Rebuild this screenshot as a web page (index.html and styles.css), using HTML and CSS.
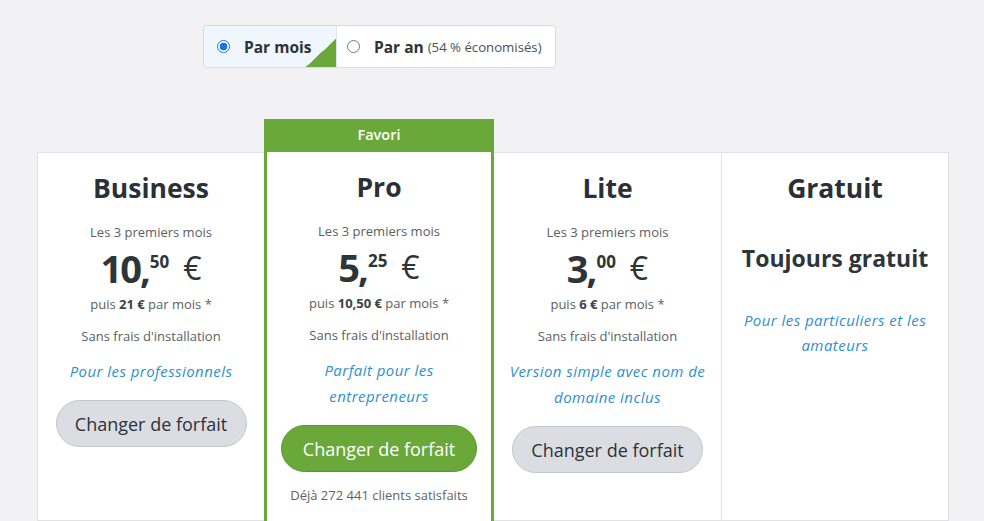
FILE: index.html
```html
<!DOCTYPE html>
<html lang="fr">
<head>
<meta charset="utf-8">
<link rel="stylesheet" href="styles.css">
</head>
<body>
<div class="page">
  <div class="toggle">
    <div class="seg seg-active">
      <span class="radio radio-on"></span>
      <span class="seg-label">Par mois</span>
      <span class="corner"></span>
    </div>
    <div class="seg seg-year">
      <span class="radio"></span>
      <span class="seg-label">Par an</span>
      <span class="seg-note">(54 % économisés)</span>
    </div>
  </div>

  <div class="plans">
    <div class="card">
      <h2 class="title">Business</h2>
      <div class="small">Les 3 premiers mois</div>
      <div class="price"><span class="int">10,</span><sup class="dec">50</sup><span class="cur">€</span></div>
      <div class="small">puis <b>21 €</b> par mois *</div>
      <div class="small setup">Sans frais d'installation</div>
      <div class="desc">Pour les professionnels</div>
      <button class="btn">Changer de forfait</button>
    </div>
    <div class="card card-pro">
      <div class="fav">Favori</div>
      <div class="pro-body">
        <h2 class="title">Pro</h2>
        <div class="small">Les 3 premiers mois</div>
        <div class="price"><span class="int">5,</span><sup class="dec">25</sup><span class="cur">€</span></div>
        <div class="small">puis <b>10,50 €</b> par mois *</div>
        <div class="small setup">Sans frais d'installation</div>
        <div class="desc">Parfait pour les<br>entrepreneurs</div>
        <button class="btn btn-green">Changer de forfait</button>
        <div class="small clients">Déjà 272 441 clients satisfaits</div>
      </div>
    </div>
    <div class="card">
      <h2 class="title">Lite</h2>
      <div class="small">Les 3 premiers mois</div>
      <div class="price"><span class="int">3,</span><sup class="dec">00</sup><span class="cur">€</span></div>
      <div class="small">puis <b>6 €</b> par mois *</div>
      <div class="small setup">Sans frais d'installation</div>
      <div class="desc">Version simple avec nom de<br>domaine inclus</div>
      <button class="btn">Changer de forfait</button>
    </div>
    <div class="card">
      <h2 class="title">Gratuit</h2>
      <div class="free">Toujours gratuit</div>
      <div class="desc desc-free">Pour les particuliers et les<br>amateurs</div>
    </div>
  </div>
</div>
</body>
</html>
```

FILE: styles.css
```css
* { box-sizing: border-box; }
html, body {
  margin: 0;
  padding: 0;
  background: #f2f2f4;
  font-family: "Open Sans", "Lato", sans-serif;
  color: #2c3338;
  overflow: hidden;
}
.page {
  width: 984px;
  height: 521px;
  padding-top: 25px;
}
.toggle {
  margin-left: 203px;
  width: 353px;
  height: 43px;
  display: flex;
  border: 1px solid #dadbde;
  border-radius: 3px;
  background: #fff;
  overflow: hidden;
}
.seg {
  position: relative;
  display: flex;
  align-items: center;
  padding-left: 13px;
}
.seg-year { padding-left: 10px; }
.seg-active {
  width: 133px;
  background: #eff6fd;
  border-right: 1px solid #dde3ea;
}
.radio {
  width: 13px;
  height: 13px;
  border-radius: 50%;
  border: 1px solid #777;
  background: #fff;
  margin-right: 14px;
  flex: none;
}
.radio-on {
  border: 1.5px solid #1a73e8;
  background: radial-gradient(circle, #1a73e8 0 3.6px, #fff 4.2px);
}
.seg-label {
  font-weight: 700;
  font-size: 15.5px;
  color: #2c3338;
}
.seg-note {
  font-size: 13.2px;
  color: #4a5055;
  margin-left: 4px;
}
.corner {
  position: absolute;
  right: 0;
  bottom: 0;
  width: 30px;
  height: 28px;
  background: linear-gradient(to top left, #6aa83a 50%, transparent 50.5%);
}
.plans {
  margin-top: 51px;
  margin-left: 37px;
  width: 912px;
  display: grid;
  grid-template-columns: 228px 229px 228px 227px;
  align-items: start;
}
.card {
  margin-top: 33px;
  height: 369px;
  background: #fff;
  border: 1px solid #e1e1e4;
  display: flex;
  flex-direction: column;
  align-items: center;
  text-align: center;
  padding-top: 18px;
}
.card + .card { border-left: none; }
.card.card-pro {
  margin-top: 0;
  height: 420px;
  padding: 0;
  border: 3px solid #6aa83a;
  border-top: none;
  align-items: stretch;
  margin-left: -1px;
  width: 230px;
}
.card-pro + .card { border-left: none; }
.fav {
  height: 33px;
  background: #6aa83a;
  color: #fff;
  font-size: 14.5px;
  font-weight: 600;
  line-height: 31px;
  text-align: center;
}
.pro-body {
  display: flex;
  flex-direction: column;
  align-items: center;
  padding-top: 18px;
}
.title {
  margin: 0;
  font-size: 26.5px;
  font-weight: 700;
  line-height: 34px;
  color: #2a3136;
}
.small {
  font-size: 13px;
  color: #5a6065;
  line-height: 18px;
}
.title + .small { margin-top: 18px; }
.small b { color: #3b4247; font-weight: 700; }
.price {
  display: flex;
  align-items: flex-start;
  height: 46px;
  margin-top: 4px;
  margin-bottom: 4px;
  color: #2e353a;
}
.int {
  font-size: 38px;
  font-weight: 700;
  line-height: 46px;
  letter-spacing: -2px;
}
.dec {
  font-size: 17px;
  font-weight: 700;
  line-height: 18px;
  margin-top: 8px;
  margin-left: 1px;
  vertical-align: baseline;
}
.cur {
  font-size: 32px;
  font-weight: 400;
  line-height: 46px;
  margin-left: 14px;
}
.setup { margin-top: 14px; }
.desc {
  margin-top: 13px;
  font-size: 15px;
  font-style: italic;
  color: #2d8fd0;
  line-height: 26px;
  letter-spacing: 0.45px;
}
.btn {
  font-family: inherit;
  font-size: 18px;
  color: #2c3338;
  background: #dcdde2;
  border: 1px solid #c5c6cc;
  border-radius: 24px;
  height: 47px;
  width: 191px;
  padding: 0;
  margin-top: 16px;
  cursor: pointer;
}
.btn-green {
  background: #6aa83a;
  border-color: #5c9630;
  color: #fff;
  width: 196px;
}
.clients { margin-top: 14px; color: #5e6468; }
.free {
  margin-top: 37px;
  font-size: 23px;
  font-weight: 700;
  color: #2e353a;
}
.desc-free { margin-top: 34px; line-height: 25px; }
```
